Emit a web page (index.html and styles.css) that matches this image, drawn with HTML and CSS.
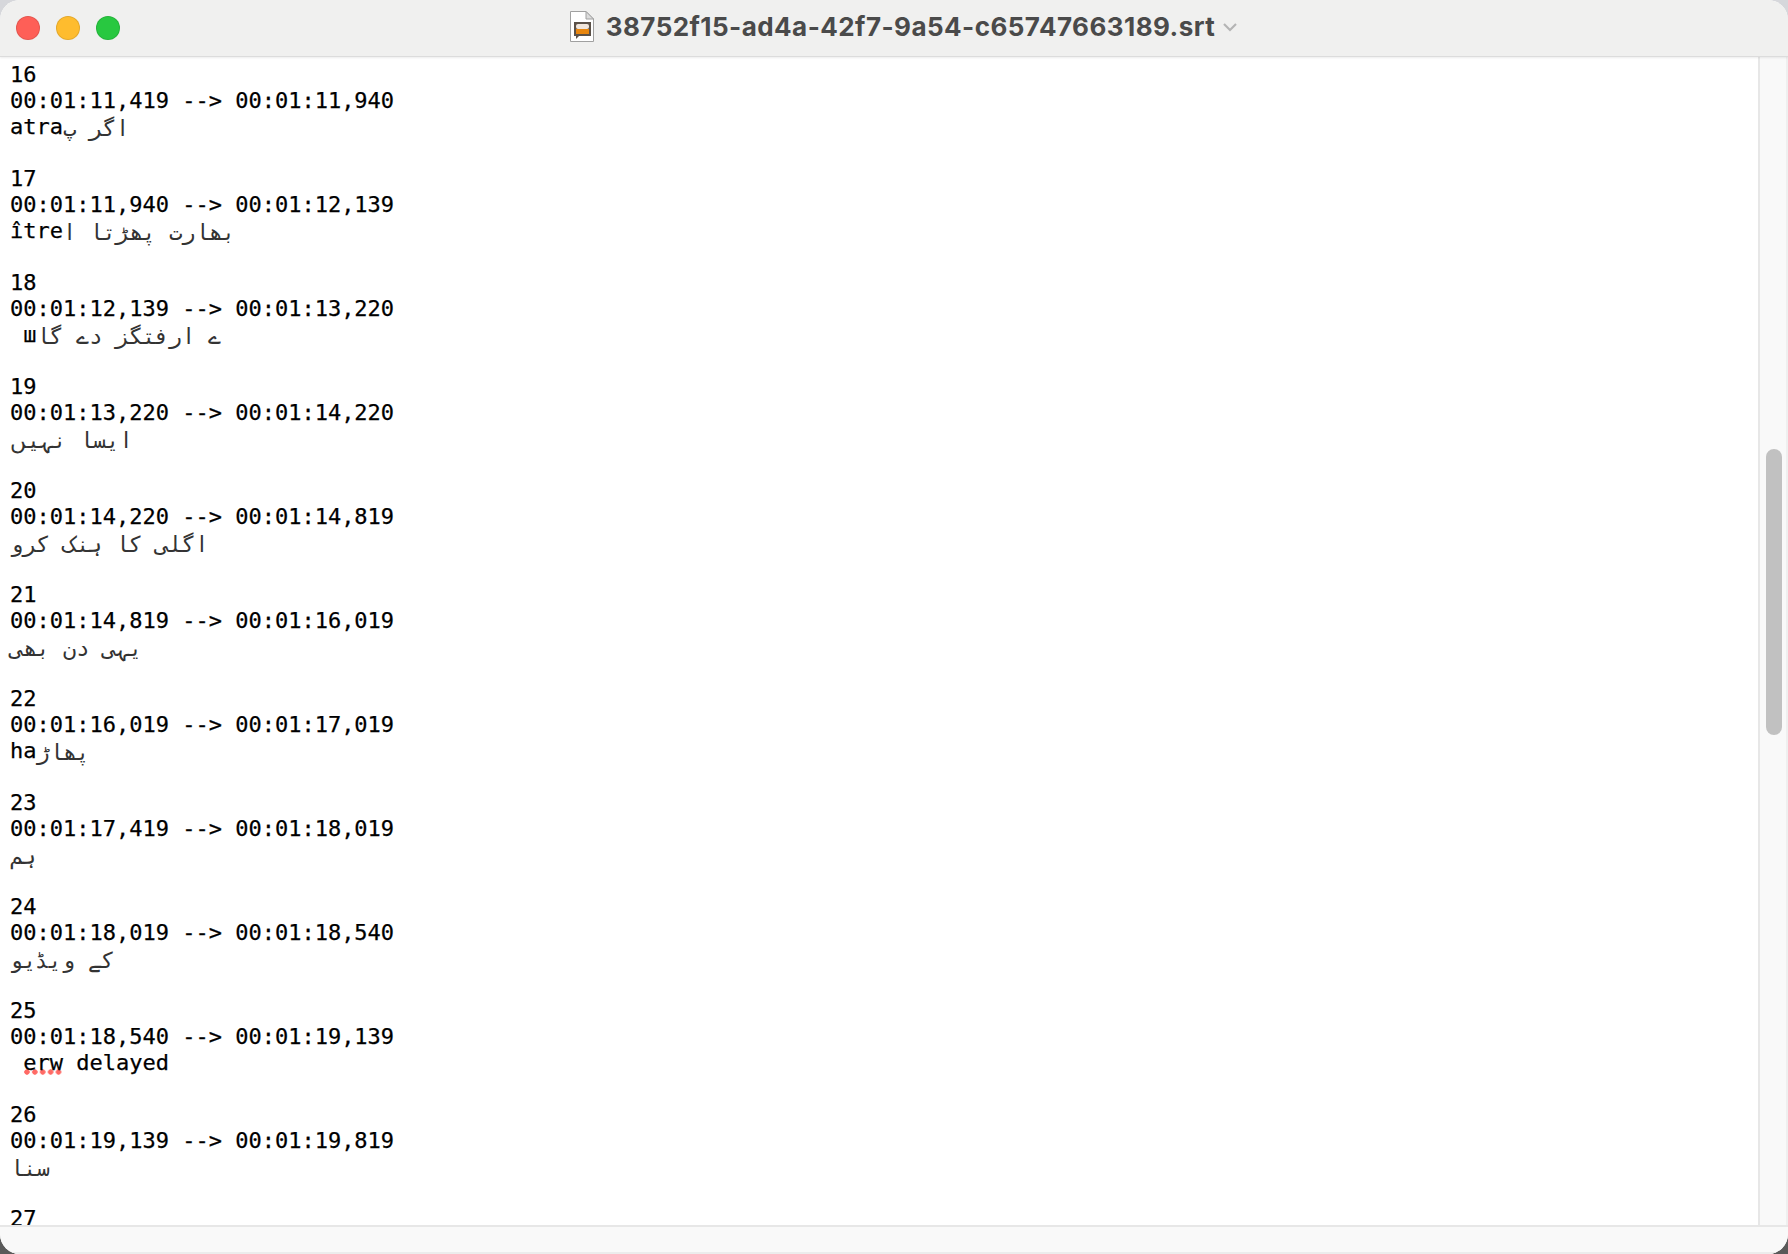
FILE: index.html
```html
<!DOCTYPE html>
<html lang="en">
<head>
<meta charset="utf-8">
<title>38752f15-ad4a-42f7-9a54-c65747663189.srt</title>
<link rel="stylesheet" href="styles.css">
</head>
<body>
<div class="window">
  <header class="titlebar">
    <div class="lights">
      <span class="light red"></span>
      <span class="light yellow"></span>
      <span class="light green"></span>
    </div>
    <div class="title">
      <svg class="doc-icon" width="24" height="31" viewBox="0 0 24 31">
        <path d="M.5 .5H16L23.500 8V30.500H.5Z" fill="#fff" stroke="#a0a0a0" stroke-width="1"/>
        <path d="M16 .5V8H23.500Z" fill="#dcdcdc" stroke="#a0a0a0" stroke-width="1"/>
        <path d="M6 25V28L9 25Z" fill="#5b5148"/>
        <rect x="4" y="11" width="17" height="14" fill="#5b5148"/>
        <rect x="6" y="13" width="13" height="5" rx="2" fill="#f1e6dc"/>
        <rect x="6" y="18" width="13" height="5" fill="#e8860f"/>
      </svg>
      <span class="title-text">38752f15-ad4a-42f7-9a54-c65747663189.srt</span>
      <svg class="chevron" width="16" height="10" viewBox="0 0 16 10">
        <path d="M2 2L8 8L14 2" fill="none" stroke="#b4b4b4" stroke-width="2.200"/>
      </svg>
    </div>
  </header>
  <div class="body">
    <main class="doc">
<pre class="text">16
00:01:11,419 --&gt; 00:01:11,940
atra<span class="ur">اگر پ</span>

17
00:01:11,940 --&gt; 00:01:12,139
ître<span class="ur">بھارت پھڑتا ا</span>

18
00:01:12,139 --&gt; 00:01:13,220
 ш<span class="ur">ے ارفتگز دے گا</span>

19
00:01:13,220 --&gt; 00:01:14,220
<span class="ur">ایسا نہیں</span>

20
00:01:14,220 --&gt; 00:01:14,819
<span class="ur">اگلی کا ہنک کرو</span>

21
00:01:14,819 --&gt; 00:01:16,019
<span class="ur">یہی دن بھی</span>

22
00:01:16,019 --&gt; 00:01:17,019
ha<span class="ur">پھاڑ</span>

23
00:01:17,419 --&gt; 00:01:18,019
<span class="ur">ہم</span>

24
00:01:18,019 --&gt; 00:01:18,540
<span class="ur">کے ویڈیو</span>

25
00:01:18,540 --&gt; 00:01:19,139
 <span class="misspelt">erw</span> delayed

26
00:01:19,139 --&gt; 00:01:19,819
<span class="ur">سنا</span>

27
00:01:19,819</pre>
    </main>
    <aside class="scroll"><div class="thumb"></div></aside>
  </div>
  <footer class="statusbar"></footer>
</div>
</body>
</html>
```
FILE: styles.css
```css
* { box-sizing: border-box; }
html, body { margin: 0; height: 100%; overflow: hidden; }
body { background: linear-gradient(#d6d7db 50%, #5a5a5a 50%); }
.window {
  width: 1788px;
  height: 1254px;
  display: flex;
  flex-direction: column;
  background: #fff;
  border-radius: 20px;
  overflow: hidden;
}
.titlebar {
  flex: 0 0 57px;
  position: relative;
  display: flex;
  align-items: center;
  justify-content: center;
  padding-bottom: 3px;
  background: #f0f0ef;
  border-bottom: 1px solid #dcdcdc;
  box-shadow: 0 1px 2px rgba(0,0,0,.08);
  z-index: 1;
}
.lights {
  position: absolute;
  left: 16px;
  top: 16px;
  display: flex;
  gap: 16px;
}
.light { width: 24px; height: 24px; border-radius: 50%; border: 1px solid rgba(0,0,0,.1); }
.red { background: #fe5f57; }
.yellow { background: #febc2e; }
.green { background: #28c840; }
.title {
  display: flex;
  align-items: center;
  gap: 12px;
  margin-left: 20px;
}
.title-text {
  font: 700 26px "Inter", "Roboto", sans-serif;
  color: #4a4a4a;
  letter-spacing: .45px;
}
.chevron { margin-left: -5px; }
.body { flex: 1; display: flex; min-height: 0; }
.doc { flex: 1; overflow: hidden; padding-left: 10px; }
.text {
  margin: 5px 0 0;
  font: 22px/26px "DejaVu Sans Mono", "Liberation Mono", monospace;
  color: #000;
  -webkit-text-stroke: .25px #000;
}
.ur {
  line-height: 20px;
  vertical-align: -2px;
  color: #333;
  -webkit-text-stroke: 0;
}
.misspelt {
  background-image: radial-gradient(circle at center, #ff6a65 2.4px, transparent 3px);
  background-size: 7.9px 6px;
  background-repeat: repeat-x;
  background-position: left bottom;
}
.scroll {
  flex: 0 0 30px;
  position: relative;
  background: #f9f9f9;
  border-left: 2px solid #e7e7e7;
  border-right: 2px solid #efefef;
}
.thumb {
  position: absolute;
  left: 6px;
  top: 392px;
  width: 16px;
  height: 286px;
  background: #c1c1c1;
  border-radius: 8px;
}
.statusbar {
  flex: 0 0 29px;
  background: #f9f9f9;
  border-top: 2px solid #e7e7e7;
  border-bottom: 2px solid #ececec;
}
```
